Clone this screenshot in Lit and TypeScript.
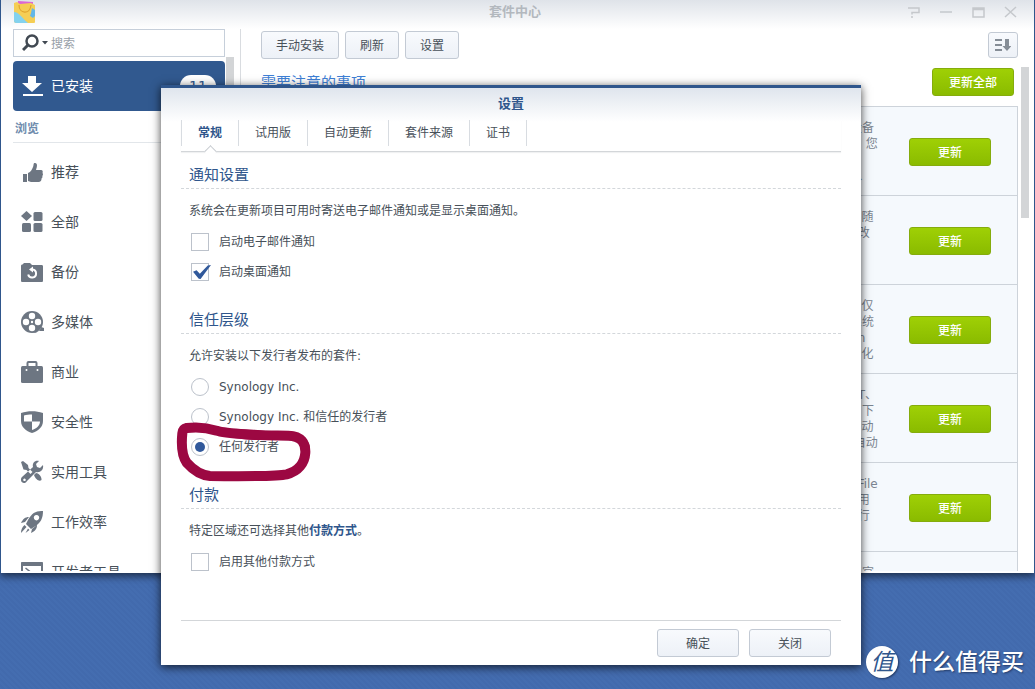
import { LitElement, html, css, svg } from "lit";
import { customElement, state } from "lit/decorators.js";
import { classMap } from "lit/directives/class-map.js";

const icons: Record<string, unknown> = {
  like: svg`<path d="M2 13h4v8H2zM7 12c3-1 4-4 5-6 1-2 0-4 2-4 3 0 2 4 1 7h5c2 0 2 2 1.500 3 .8 1 .6 2-.2 3 .4 1 .1 2-.8 2.500 .2 2-1 3.500-3 3.500H10l-3-1z"/>`,
  all: svg`<path d="M5.500 0l5.500 5-5.500 5L0 5z"/><rect x="12.500" y="1" width="9" height="9" rx="1.500"/><rect x="1" y="12" width="9" height="9" rx="1.500"/><rect x="12.500" y="12" width="9" height="9" rx="1.500"/>`,
  backup: svg`<path d="M0 5c0-1 .5-1.500 1.500-1.500L3 2h6l2 2h9.500c1 0 1.500.5 1.500 1.500v14c0 1-.5 1.500-1.500 1.500h-19C.5 21 0 20.500 0 19.500z"/><path d="M11.500 8.500a4 4 0 1 1-4.300 5" fill="none" stroke="#fff" stroke-width="2"/><path d="M12 5.500v6L8 8.500z" fill="#fff"/>`,
  media: svg`<circle cx="11" cy="11" r="11"/><path d="M11 22c5 0 8-2 9-6l3 1v3h-5z"/><g fill="#fff"><circle cx="11" cy="5" r="3.200"/><circle cx="5" cy="11" r="3.200"/><circle cx="17" cy="11" r="3.200"/><circle cx="11" cy="17" r="3.200"/><circle cx="11" cy="11" r="1.200"/></g>`,
  business: svg`<path d="M6.500 5V2c0-.8.4-1 1-1h7c.6 0 1 .3 1 1v3" fill="none" stroke="#6d7682" stroke-width="2"/><rect y="5" width="22" height="17" rx="1.500"/><circle cx="5.500" cy="9" r="1" fill="#fff"/><circle cx="16.500" cy="9" r="1" fill="#fff"/>`,
  security: svg`<path d="M0 2c7-2.500 15-2.500 22 0v8c0 6-5 10-11 12C5 20 0 16 0 10z"/><path d="M11 3.500v7H3V4.500c2.500-.8 5-1 8-1zM11 10.500h8c0 4-4 7.500-8 8.500z" fill="#fff"/>`,
  tools: svg`<path d="M0 1l2-1 5 4 .5 3 4 4-2 2-4-4-3-.5zM13 14l2-2c3 0 6 4 5.500 7-2.500 2-6-1-7.500-5zM22 4l-3 3-3-1-1-3 3-3c-4-1-7 2-6 6L1 16c-2 2-1 6 2 6 1.500 0 2-.5 3-2l9-9c4 1 8-2 7-7zM3.500 17.500a1.300 1.300 0 1 1-.01 0z" fill-rule="evenodd"/>`,
  rocket: svg`<path fill-rule="evenodd" d="M22 0c-7-.5-11 2-15 9l-2 4 5 5 3-2C20 12 22 7 22 0zM15.500 4a2.700 2.700 0 1 1-.01 0zM8 6C4 6 2 8 0 12l4-1zM16 14c0 4-2 6-6 8l1-4zM3.500 14l2 2-5.500 6c0-3 1-6 3.500-8zM7 17.500l1.500 1.500-4 3z"/>`,
  dev: svg`<path fill-rule="evenodd" d="M1 1h20c.6 0 1 .4 1 1v19H0V2c0-.6.4-1 1-1zM2 5v14h18V5z"/><path d="M4.500 7l5 4-5 4" fill="none" stroke="#6d7682" stroke-width="1.500"/>`,
};

const categories = [
  ["like", "推荐"],
  ["all", "全部"],
  ["backup", "备份"],
  ["media", "多媒体"],
  ["business", "商业"],
  ["security", "安全性"],
  ["tools", "实用工具"],
  ["rocket", "工作效率"],
  ["dev", "开发者工具"],
];

const updates = [
  ["设备", "\u00a0，您", "", "\u00a0\u00a0、"],
  ["\u00a0\u00a0\u00a0随", "\u00a0\u00a0改", "", ""],
  ["\u00a0\u00a0\u00a0仅", "系统", "\u00a0\u00a0n", "\u00a0\u00a0\u00a0化"],
  ["\u00a0\u00a0T、", "，下", "\u00a0\u00a0\u00a0动", "\u00a0自动"],
  ["\u00a0\u00a0File", "\u00a0\u00a0用", "\u00a0\u00a0行", ""],
  ["一官", "", "", ""],
];

const tabs = ["常规", "试用版", "自动更新", "套件来源", "证书"];
const publishers = ["Synology Inc.", "Synology Inc. 和信任的发行者", "任何发行者"];

const base = css`
  * {
    box-sizing: border-box;
  }
  h1,
  h2,
  h3,
  p,
  ul {
    margin: 0;
    padding: 0;
  }
  ul {
    list-style: none;
  }
  button {
    height: 28px;
    padding: 1px 14px 0;
    border: 1px solid #c3cad4;
    border-radius: 3px;
    background: linear-gradient(#f8fafd, #edf1f7);
    color: #475059;
    font: inherit;
    white-space: nowrap;
  }
  a {
    color: inherit;
    text-decoration: none;
  }
`;

@customElement("package-center")
class PackageCenter extends LitElement {
  static styles = [
    base,
    css`
      :host {
        display: flex;
        flex-direction: column;
        overflow: hidden;
        background: #fff;
        border: solid #2f568c;
        border-width: 0 1px;
        box-shadow: 0 3px 8px rgba(0, 0, 0, 0.6);
      }
      .titlebar {
        flex: none;
        display: grid;
        grid-template-columns: 1fr auto 1fr;
        align-items: center;
        height: 29px;
        padding: 0 17px 5px 12px;
        background: linear-gradient(#dfe3e9, #fff);
      }
      .titlebar h1 {
        font-size: 13px;
        line-height: 24px;
        color: #b3b8be;
      }
      .logo {
        display: block;
      }
      .controls {
        display: flex;
        justify-content: flex-end;
        gap: 18px;
      }
      .controls button {
        width: 14px;
        height: 14px;
        padding: 0;
        border: 0;
        background: none;
      }
      .controls svg {
        display: block;
        fill: none;
        stroke: #c5c8cc;
        stroke-width: 1.5;
      }
      .body {
        flex: 1;
        min-height: 0;
        display: flex;
        padding-bottom: 2px;
      }
      .side {
        flex: none;
        width: 240px;
        padding-left: 12px;
        display: flex;
        flex-direction: column;
        border-right: 1px solid #d9dce0;
      }
      .search {
        flex: none;
        display: flex;
        align-items: center;
        width: 212px;
        height: 28px;
        padding: 0 8px;
        border: 1px solid #c6cfda;
      }
      .search svg {
        flex: none;
      }
      .search input {
        min-width: 0;
        flex: 1;
        margin-left: 3px;
        padding: 1px 0 0;
        border: 0;
        outline: 0;
        font: inherit;
      }
      .search input::placeholder {
        color: #98a0a8;
        opacity: 1;
      }
      .scroller {
        flex: 1;
        min-height: 0;
        display: flex;
        overflow: hidden;
      }
      .nav {
        width: 212px;
        padding-top: 4px;
        font-size: 14px;
      }
      .item {
        display: flex;
        align-items: center;
        gap: 7px;
        height: 50px;
        padding-left: 8px;
        color: #475059;
      }
      .item svg {
        width: 23px;
        height: 23px;
        fill: #6d7682;
        overflow: visible;
      }
      .installed {
        padding-right: 9px;
        border-radius: 4px;
        background: #31598f;
        color: #fff;
      }
      .installed svg {
        fill: #fff;
      }
      .badge {
        margin-left: auto;
        width: 36px;
        line-height: 22px;
        border-radius: 11px;
        background: #fff;
        color: #31598f;
        text-align: center;
      }
      .group {
        height: 32px;
        margin-bottom: 4px;
        padding-left: 2px;
        border-bottom: 1px solid #e2e6ea;
        font-size: 12px;
        line-height: 37px;
        color: #6f8cad;
      }
      .thumb {
        width: 8px;
        margin-left: 1px;
        background: #d3d5d7;
      }
      .main {
        flex: 1;
        min-width: 0;
        display: flex;
        flex-direction: column;
        padding: 2px 5px 0 20px;
      }
      .toolbar {
        flex: none;
        display: flex;
        align-items: center;
        gap: 6px;
        padding-right: 11px;
      }
      .sort {
        width: 30px;
        height: 26px;
        margin-left: auto;
        padding: 0;
      }
      .sort svg {
        display: block;
        margin: auto;
      }
      .content {
        flex: 1;
        min-height: 0;
        display: flex;
        gap: 2px;
        margin-top: 8px;
      }
      .column {
        flex: 1;
        overflow: hidden;
      }
      .notice {
        display: flex;
        align-items: flex-start;
        justify-content: space-between;
        height: 39px;
        padding: 1px 4px 0 0;
      }
      .notice h2 {
        font-size: 15px;
        font-weight: 400;
        line-height: 30px;
        color: #3f80d6;
      }
      .green {
        width: 82px;
        padding: 1px 0 0;
        border-color: #85ac0c;
        background: linear-gradient(#9fd005, #8abb00);
        color: #fff;
        font-weight: 500;
      }
      .list {
        border: solid #cdd3da;
        border-width: 1px 1px 0;
      }
      .row {
        display: flex;
        align-items: center;
        justify-content: flex-end;
        height: 89px;
        padding: 2px 26px 0 0;
        border-bottom: 1px solid #cdd3da;
        background: #f5f9fd;
      }
      .desc {
        width: 59px;
        height: 64px;
        color: #7b8591;
        line-height: 16px;
        white-space: pre;
      }
      .desc p {
        height: 16px;
      }
      .main .thumb {
        height: 151px;
      }
    `,
  ];

  render() {
    return html`
      <header class="titlebar">
        <svg class="logo" width="24" height="24" viewBox="0 0 24 24">
          <path d="M5 1l15 1v6H4z" fill="#dc66d6" />
          <path d="M1 3l3-1 3 2 11-1 4 2v17c0 1-1 1-2 1H3c-1 0-2-1-2-2z" fill="#f5ce55" />
          <path d="M1 12c5 0 8 6 14 11H3c-1 0-2-1-2-2z" fill="#83d2ee" />
          <path d="M6 5c0 9 11 10 12 0" fill="none" stroke="#e0a52e" stroke-width="1.200" />
          <path d="M19 8l3 2v6l-2 2-3-2 1-3z" fill="#63b7e8" />
        </svg>
        <h1>套件中心</h1>
        <div class="controls">
          <button aria-label="帮助"><svg width="14" height="14"><path d="M1 3h11v4.500H5v2M5 11v2" /></svg></button>
          <button aria-label="最小化"><svg width="14" height="14"><path d="M1 7h12" /></svg></button>
          <button aria-label="最大化"><svg width="14" height="14"><path d="M2 3h11v9H2zM2 4.500h11" /></svg></button>
          <button aria-label="关闭"><svg width="14" height="14"><path d="M2 2l11 10M13 2L2 12" /></svg></button>
        </div>
      </header>
      <div class="body">
        <aside class="side">
          <label class="search">
            <svg width="26" height="18" viewBox="0 0 26 18">
              <circle cx="10" cy="7" r="5.500" fill="none" stroke="#414952" stroke-width="2.500" />
              <path d="M6 11l-5 5" stroke="#414952" stroke-width="3" />
              <path d="M20 7h6l-3 3.500z" fill="#414952" />
            </svg>
            <input type="text" placeholder="搜索" aria-label="搜索" />
          </label>
          <div class="scroller">
            <nav class="nav">
              <a class="item installed" href="#">
                <svg viewBox="0 0 23 23"><path d="M7 1h8v7h6l-10 9L1 8h6zM2 19h20v2H2z" /></svg>
                <span>已安装</span><span class="badge">11</span>
              </a>
              <h3 class="group">浏览</h3>
              ${categories.map(
                ([icon, name]) => html`<a class="item" href="#"><svg viewBox="0 0 23 23">${icons[icon]}</svg><span>${name}</span></a>`
              )}
            </nav>
            <div class="thumb"></div>
          </div>
        </aside>
        <main class="main">
          <div class="toolbar">
            <button>手动安装</button><button>刷新</button><button>设置</button>
            <button class="sort" aria-label="排序">
              <svg width="16" height="14"><path d="M0 2h7M0 7h7M0 12h7" stroke="#858d96" stroke-width="2" /><path d="M10 1h4v7h2.500L12 13 7.500 8H10z" fill="#858d96" /></svg>
            </button>
          </div>
          <div class="content">
            <div class="column">
              <div class="notice"><h2>需要注意的事项</h2><button class="green">更新全部</button></div>
              <ul class="list">
                ${updates.map(
                  (lines) => html`<li class="row">
                    <div class="desc">${lines.map((l) => html`<p>${l}</p>`)}</div>
                    <button class="green">更新</button>
                  </li>`
                )}
              </ul>
            </div>
            <div class="thumb"></div>
          </div>
        </main>
      </div>
    `;
  }
}

@customElement("settings-dialog")
class SettingsDialog extends LitElement {
  static styles = [
    base,
    css`
      :host {
        display: flex;
        flex-direction: column;
        background: #fff;
        border-top: 3px solid #2f568c;
        box-shadow: 0 2px 9px rgba(0, 0, 0, 0.75);
        color: #475059;
      }
      .head {
        padding: 0 20px;
        background: linear-gradient(#dfe5ed, #fff 34px);
      }
      .head h2 {
        font-size: 13px;
        line-height: 32px;
        text-align: center;
        color: #2f568c;
      }
      .tabs {
        display: flex;
        height: 32px;
        border-bottom: 1px solid #d3d6d9;
        box-shadow: 0 1px 1px #f0f1f2;
      }
      .tab {
        position: relative;
        height: 26px;
        padding: 0 16px;
        border: 0;
        border-left: 1px solid #d8dce1;
        border-radius: 0;
        background: none;
      }
      .tab:last-child {
        border-right: 1px solid #d8dce1;
      }
      .active {
        color: #2f568c;
        font-weight: 700;
      }
      .active::after {
        content: "";
        position: absolute;
        left: 24px;
        top: 27px;
        width: 8px;
        height: 8px;
        border: solid #c6cacf;
        border-width: 1px 0 0 1px;
        background: #fff;
        transform: rotate(45deg);
      }
      .form {
        padding: 8px 20px 43px;
      }
      .section + .section {
        margin-top: 18px;
      }
      .section h3 {
        height: 29px;
        padding-left: 8px;
        border-bottom: 1px dashed #d3d7db;
        font-size: 15px;
        font-weight: 400;
        line-height: 30px;
        color: #2f568c;
      }
      .section p {
        margin: 10px 0 4px;
        padding-left: 8px;
        line-height: 24px;
      }
      .section a {
        color: #2f568c;
        font-weight: 700;
      }
      .option {
        display: flex;
        align-items: center;
        gap: 10px;
        width: max-content;
        height: 30px;
        padding-left: 10px;
      }
      .option input {
        appearance: none;
        position: relative;
        width: 18px;
        height: 18px;
        margin: 0;
        border: 1px solid #bcc2cb;
        background: #fff;
      }
      .option input[type="radio"] {
        border-radius: 50%;
      }
      .option input:checked::after {
        content: "";
        position: absolute;
        background: #31599b;
      }
      .option input[type="radio"]:checked::after {
        inset: 3px;
        border-radius: 50%;
      }
      .option input[type="checkbox"]:checked::after {
        left: 1px;
        top: 1px;
        width: 18px;
        height: 14px;
        clip-path: polygon(0 48%, 20% 38%, 38% 62%, 82% 4%, 100% 0, 42% 100%, 32% 98%);
      }
      .foot {
        display: flex;
        justify-content: flex-end;
        gap: 10px;
        margin: 0 20px;
        padding: 8px 10px;
        border-top: 1px solid #d3d6d9;
      }
      .foot button {
        width: 82px;
      }
    `,
  ];

  @state() private tab = 0;
  @state() private publisher = 2;

  render() {
    return html`
      <header class="head">
        <h2>设置</h2>
        <div class="tabs" role="tablist">
          ${tabs.map(
            (t, i) => html`<button role="tab" class=${classMap({ tab: true, active: i === this.tab })} @click=${() => (this.tab = i)}>${t}</button>`
          )}
        </div>
      </header>
      <div class="form">
        <section class="section">
          <h3>通知设置</h3>
          <p>系统会在更新项目可用时寄送电子邮件通知或是显示桌面通知。</p>
          <label class="option"><input type="checkbox" />启动电子邮件通知</label>
          <label class="option"><input type="checkbox" checked />启动桌面通知</label>
        </section>
        <section class="section">
          <h3>信任层级</h3>
          <p>允许安装以下发行者发布的套件:</p>
          ${publishers.map(
            (name, i) => html`<label class="option"
              ><input type="radio" name="publisher" .checked=${i === this.publisher} @change=${() => (this.publisher = i)} />${name}</label
            >`
          )}
        </section>
        <section class="section">
          <h3>付款</h3>
          <p>特定区域还可选择其他<a href="#">付款方式</a>。</p>
          <label class="option"><input type="checkbox" />启用其他付款方式</label>
        </section>
      </div>
      <footer class="foot"><button>确定</button><button>关闭</button></footer>
    `;
  }
}

@customElement("app-root")
class AppRoot extends LitElement {
  static styles = css`
    :host {
      display: block;
      position: relative;
      min-height: 100vh;
      overflow: hidden;
      background: repeating-linear-gradient(45deg, #446db0 0 2px, #426aad 2px 4px);
      font: 12px/16px "DejaVu Sans", "Noto Sans CJK SC", sans-serif;
    }
    .center {
      height: calc(100vh - 116px);
    }
    .dialog {
      position: absolute;
      left: 161px;
      top: 85px;
      width: 700px;
    }
    .marker {
      position: absolute;
      left: 176px;
      top: 420px;
      pointer-events: none;
    }
    .brand {
      position: absolute;
      right: 11px;
      bottom: 11px;
      display: flex;
      align-items: center;
      gap: 11px;
      color: #fff;
      font-size: 23px;
      font-weight: 500;
      line-height: 32px;
      text-shadow: 1px 1px 2px #223a66;
    }
    .seal {
      width: 32px;
      height: 32px;
      border-radius: 50%;
      background: #fff;
      box-shadow: 1px 1px 2px #223a66;
      color: #2f568c;
      font-size: 23px;
      font-style: italic;
      font-weight: 400;
      line-height: 32px;
      text-align: center;
      text-shadow: none;
    }
  `;

  render() {
    return html`
      <package-center class="center"></package-center>
      <settings-dialog class="dialog" role="dialog" aria-label="设置"></settings-dialog>
      <svg class="marker" width="136" height="62" viewBox="48 360 408 186">
        <path
          d="M80 384C110 380 145 384 170 392C190 400 230 401 280 404C330 408 350 406 385 407C425 408 437 430 436 458C434 490 415 514 380 523C350 530 240 529 150 528C115 525 95 505 80 488C64 465 64 430 67 400C68 390 70 386 80 384Z"
          fill="none"
          stroke="#9c0842"
          stroke-width="30"
          stroke-linejoin="round"
        />
        <path d="M160 378C190 388 280 390 350 394C400 390 440 402 450 440L430 440C410 410 370 420 300 420C240 420 200 410 160 398Z" fill="#9c0842" />
      </svg>
      <div class="brand"><span class="seal">值</span><span>什么值得买</span></div>
    `;
  }
}
